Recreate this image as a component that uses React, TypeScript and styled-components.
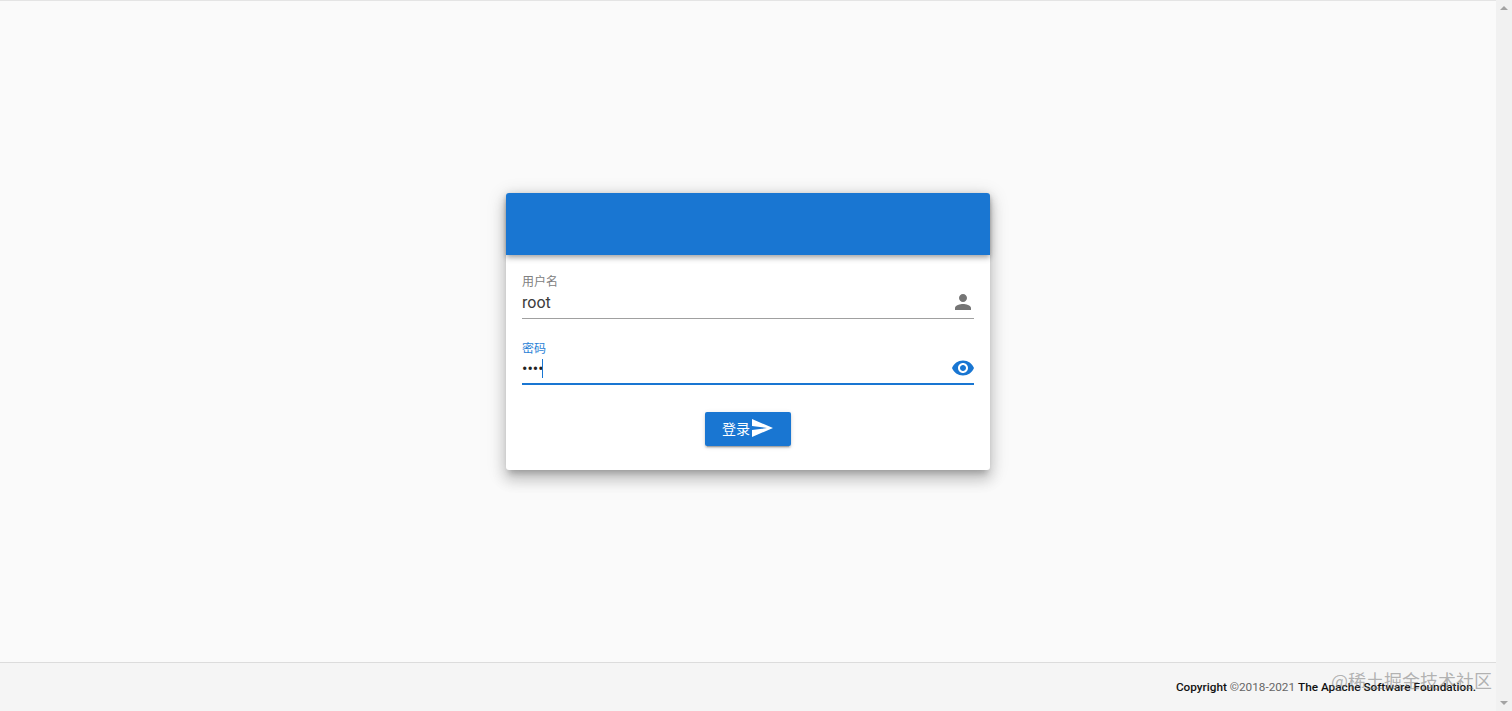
import React from "react";
import styled, {createGlobalStyle} from "styled-components";

const GlobalStyle = createGlobalStyle`
  html, body {
    margin: 0;
    height: 100%;
    overflow: hidden;
    background: #fafafa;
  }
  body {
    font-family: Roboto, "Noto Sans CJK SC", sans-serif;
  }
  #root {
    height: 100%;
  }
`;

const personPath = "M12 12c2.21 0 4-1.79 4-4s-1.79-4-4-4-4 1.79-4 4 1.79 4 4 4zm0 2c-2.67 0-8 1.34-8 4v2h16v-2c0-2.66-5.33-4-8-4z";
const eyePath = "M12 4.5C7 4.5 2.73 7.61 1 12c1.73 4.39 6 7.5 11 7.5s9.27-3.11 11-7.5c-1.73-4.39-6-7.5-11-7.5zM12 17c-2.76 0-5-2.24-5-5s2.24-5 5-5 5 2.24 5 5-2.24 5-5 5zm0-8c-1.66 0-3 1.34-3 3s1.34 3 3 3 3-1.34 3-3-1.34-3-3-3z";
const sendPath = "M2.01 21L23 12 2.01 3 2 10l15 2-15 2z";

export default function App() {
  return (
    <>
      <GlobalStyle />
      <Page>
        <Main>
          <Content>
            <Card>
              <CardHeader />
              <CardBody>
                <Field>
                  <Label>用户名</Label>
                  <InputRow>
                    <Input type="text" value="root" readOnly />
                    <Icon viewBox="0 0 24 24" $color="#757575"><path d={personPath} /></Icon>
                  </InputRow>
                </Field>
                <Field>
                  <Label $focused>密码</Label>
                  <InputRow $focused>
                    <PasswordInput type="password" value="root" readOnly />
                    <Caret />
                    <Spacer />
                    <Icon viewBox="0 0 24 24" $color="#1976d2"><path d={eyePath} /></Icon>
                  </InputRow>
                </Field>
                <Actions>
                  <SubmitButton type="button">
                    登录
                    <SendIcon viewBox="0 0 24 24"><path d={sendPath} /></SendIcon>
                  </SubmitButton>
                </Actions>
              </CardBody>
            </Card>
          </Content>
          <Footer>
            <b>Copyright</b>&nbsp;<Years>©2018-2021</Years>&nbsp;<b>The Apache Software Foundation.</b>
          </Footer>
        </Main>
        <Scrollbar>
          <ArrowUp />
          <ArrowDown />
        </Scrollbar>
        <Watermark>@稀土掘金技术社区</Watermark>
      </Page>
    </>
  );
}

const Page = styled.div`
  position: relative;
  display: flex;
  height: 711px;
  overflow: hidden;
`;

const Main = styled.div`
  flex: 1;
  display: flex;
  flex-direction: column;
  min-width: 0;
  border-top: 1px solid #e4e4e4;
`;

const Content = styled.div`
  height: 661px;
  box-sizing: border-box;
  padding-top: 192px;
  display: flex;
  justify-content: center;
`;

const Card = styled.div`
  width: 484px;
  height: 277px;
  border-radius: 3px;
  background: #fff;
  box-shadow: 0 6px 6px -3px rgba(0, 0, 0, 0.2), 0 10px 14px 1px rgba(0, 0, 0, 0.14), 0 4px 18px 3px rgba(0, 0, 0, 0.12);
`;

const CardHeader = styled.div`
  height: 62px;
  border-radius: 3px 3px 0 0;
  background: #1976d2;
  box-shadow: 0 2px 4px -1px rgba(0, 0, 0, 0.2), 0 4px 5px 0 rgba(0, 0, 0, 0.14), 0 1px 10px 0 rgba(0, 0, 0, 0.12);
`;

const CardBody = styled.div`
  padding: 20px 16px 0;
  display: flex;
  flex-direction: column;
  gap: 23px;
`;

const Field = styled.div`
  display: flex;
  flex-direction: column;
`;

const Label = styled.label<{$focused?: boolean}>`
  font-size: 12px;
  line-height: 14px;
  color: ${({$focused}) => $focused ? "#2a7fd6" : "#808080"};
`;

const InputRow = styled.div<{$focused?: boolean}>`
  display: flex;
  align-items: center;
  height: ${({$focused}) => $focused ? 25 : 27}px;
  padding-bottom: 2px;
  border-bottom: ${({$focused}) => $focused ? "2px solid #1976d2" : "1px solid #a0a0a0"};
`;

const Input = styled.input`
  flex: 1;
  min-width: 0;
  border: 0;
  outline: 0;
  padding: 0;
  background: transparent;
  font: 16px Roboto, sans-serif;
  color: #3c3c3c;
`;

const PasswordInput = styled(Input)`
  flex: none;
  width: 20px;
  color: #222;
`;

const Caret = styled.span`
  width: 1px;
  height: 19px;
  background: #1976d2;
`;

const Spacer = styled.span`
  flex: 1;
`;

const Icon = styled.svg<{$color: string}>`
  flex: none;
  width: 24px;
  height: 24px;
  margin: 0 -1px 2px 0;
  fill: ${({$color}) => $color};
`;

const Actions = styled.div`
  display: flex;
  justify-content: center;
  margin-top: 4px;
`;

const SubmitButton = styled.button`
  display: flex;
  align-items: center;
  justify-content: center;
  width: 86px;
  height: 34px;
  padding: 0 0 3px 0;
  border: 0;
  border-radius: 2px;
  background: #1976d2;
  color: #fff;
  font: 14px Roboto, "Noto Sans CJK SC", sans-serif;
  box-shadow: 0 3px 1px -2px rgba(0, 0, 0, 0.2), 0 2px 2px 0 rgba(0, 0, 0, 0.14), 0 1px 5px 0 rgba(0, 0, 0, 0.12);
`;

const SendIcon = styled.svg`
  width: 24px;
  height: 24px;
  fill: #fff;
`;

const Footer = styled.footer`
  flex: 1;
  display: flex;
  align-items: center;
  justify-content: flex-end;
  box-sizing: border-box;
  padding: 0 20px 0 0;
  border-top: 1px solid #dcdcdc;
  background: #f5f5f5;
  font-size: 11.75px;
  color: #111;

  b {
    font-weight: 500;
  }
`;

const Years = styled.span`
  color: #666;
`;

const Scrollbar = styled.div`
  width: 16px;
  display: flex;
  flex-direction: column;
  justify-content: space-between;
  align-items: center;
  padding: 6px 0;
  box-sizing: border-box;
  background: #f1f1f1;
`;

const ArrowUp = styled.span`
  border-left: 4px solid transparent;
  border-right: 4px solid transparent;
  border-bottom: 4px solid #a3a3a3;
`;

const ArrowDown = styled.span`
  border-left: 4px solid transparent;
  border-right: 4px solid transparent;
  border-top: 4px solid #a3a3a3;
`;

const Watermark = styled.div`
  position: absolute;
  right: 20px;
  top: 669px;
  font: 18px "Noto Sans CJK SC", sans-serif;
  line-height: 22px;
  color: rgba(120, 120, 120, 0.55);
`;
